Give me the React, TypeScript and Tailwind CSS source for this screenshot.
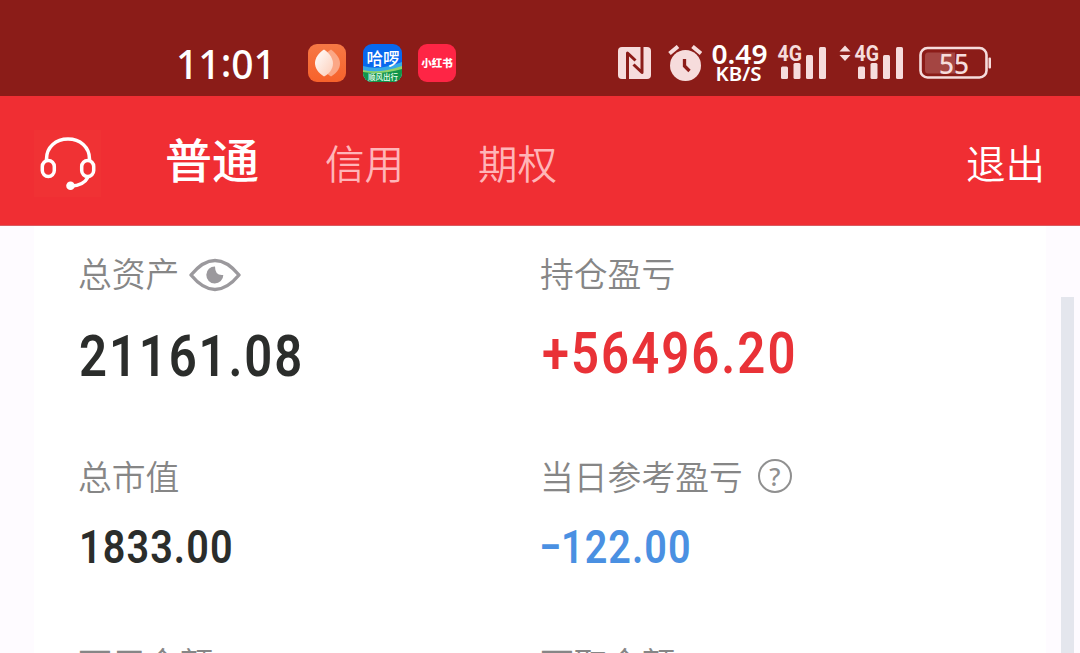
import type { ReactNode } from 'react';

const cjk = "font-['Noto_Sans_CJK_SC',sans-serif]";

function SignalBars() {
  return (
    <svg width="50" height="40" viewBox="0 0 50 40" className="block shrink-0 overflow-visible">
      <g fill="#f6dcdc">
        <rect x="5" y="22.500" width="7" height="12.500" rx="1.500" />
        <rect x="17.500" y="19" width="7" height="16" rx="1.500" />
        <rect x="30" y="11" width="7" height="24" rx="1.500" />
        <rect x="43" y="3" width="7" height="32" rx="1.500" />
      </g>
      <text x="1.500" y="17" fontSize="22.500" fontWeight="700" fill="#f6dcdc" fontFamily="Roboto" textLength="24.500" lengthAdjust="spacingAndGlyphs">4G</text>
    </svg>
  );
}

function StatusBar() {
  return (
    <header className="flex h-24 shrink-0 items-start bg-[#8b1c18] text-white">
      <div className="mt-[44px] ml-[176px] w-[132px] font-['Noto_Sans',sans-serif] text-[39px] leading-[40px] font-medium whitespace-nowrap">
        11<span className="relative -top-[2px]">:</span>01
      </div>
      <svg width="38" height="38" viewBox="0 0 38 38" className="mt-[44px] shrink-0">
        <defs>
          <linearGradient id="orange" x1="0" y1="0" x2="0" y2="1">
            <stop offset="0" stopColor="#f67845" />
            <stop offset="1" stopColor="#f7622b" />
          </linearGradient>
          <linearGradient id="petal" x1="0" y1="0" x2="1" y2="1">
            <stop offset="0" stopColor="#fff" />
            <stop offset="1" stopColor="#fccdb8" />
          </linearGradient>
        </defs>
        <rect width="38" height="38" rx="9" fill="url(#orange)" />
        <path d="M23 5.500 C29 10 32 15 32 19.500 C32 25 28 29.500 23 32.500 L18 29 L18 9 Z" fill="#fba786" />
        <path d="M16 5.500 C22 9.500 25 15 25 19.500 C25 25 21 30 16 32.500 C10 29 7 24 7 19 C7 14 11 8.500 16 5.500 Z" fill="url(#petal)" />
      </svg>
      <svg width="39" height="38" viewBox="0 0 39 38" className="mt-[44px] ml-[17px] shrink-0 overflow-visible">
        <defs>
          <clipPath id="tile"><rect width="39" height="38" rx="9" /></clipPath>
        </defs>
        <g clipPath="url(#tile)">
          <rect width="39" height="38" fill="#0868ee" />
          <path d="M0 22 Q16 27 39 18 V38 H0 Z" fill="#35a9e7" />
          <path d="M0 26 Q16 30 39 22 V38 H0 Z" fill="#8ed36b" />
          <path d="M0 28 Q18 31 39 25 V38 H0 Z" fill="#12954a" />
        </g>
        <text x="3.500" y="21" fontSize="17" fontWeight="500" fill="#fff" fontFamily="Noto Sans CJK SC" textLength="33" lengthAdjust="spacingAndGlyphs">哈啰</text>
        <text x="5" y="35.500" fontSize="7.500" fontWeight="500" fill="#e8fff0" fontFamily="Noto Sans CJK SC" textLength="30" lengthAdjust="spacingAndGlyphs">顺风出行</text>
      </svg>
      <div className={`${cjk} mt-[44px] ml-[16px] flex h-[38px] w-[38px] shrink-0 items-center justify-center rounded-[9px] bg-[#fe2545] text-[10.500px] leading-none font-black whitespace-nowrap`}>小红书</div>
      <svg width="33" height="33" viewBox="0 0 33 33" className="mt-[46px] ml-[162px] shrink-0">
        <rect width="33" height="32" rx="4" y="1" fill="#f6dcdc" />
        <path d="M9.500 33 V7 L17.500 14.500 M24 0 V26.500 L15.500 18.500" fill="none" stroke="#8b1c18" strokeWidth="3" strokeLinejoin="round" />
      </svg>
      <svg width="34" height="37" viewBox="0 0 34 37" className="mt-[45px] ml-[17px] shrink-0">
        <circle cx="17.500" cy="20.500" r="15.500" fill="#f6dcdc" />
        <path d="M1.500 8.500 L10 1.500 M24.500 1.500 L33 8.500" stroke="#f6dcdc" strokeWidth="4" />
        <path d="M16.500 14 V21 L21.500 26" fill="none" stroke="#8b1c18" strokeWidth="3.300" />
      </svg>
      <svg width="58" height="44" viewBox="0 0 58 44" className="mt-[42px] ml-[9px] shrink-0 overflow-visible">
        <text x="0.500" y="21.500" fontSize="27.500" fontWeight="600" fill="#fff" fontFamily="Noto Sans" textLength="56" lengthAdjust="spacingAndGlyphs">0.49</text>
        <text x="4.500" y="39" fontSize="19.500" fontWeight="600" fill="#fff" fontFamily="Noto Sans" textLength="46" lengthAdjust="spacingAndGlyphs">KB/S</text>
      </svg>
      <div className="mt-[44px] ml-[7px]"><SignalBars /></div>
      <svg width="12" height="17" viewBox="0 0 12 17" className="mt-[45px] ml-[13px] shrink-0">
        <path d="M6 0.500 L11.500 6.500 H0.500 Z M0.500 10 H11.500 L6 16 Z" fill="#f6dcdc" />
      </svg>
      <div className="mt-[44px] ml-[2px]"><SignalBars /></div>
      <svg width="73" height="34" viewBox="0 0 73 34" className="mt-[46px] ml-[16px] shrink-0 overflow-visible">
        <rect x="1.500" y="2" width="66" height="29.500" rx="7" fill="none" stroke="#f6dcdc" strokeWidth="2.600" />
        <path d="M9 6.500 H36 V27.500 H9 Q6 27.500 6 24 V10 Q6 6.500 9 6.500 Z" fill="#a44542" />
        <rect x="69.500" y="11.500" width="2.500" height="11" rx="1" fill="#f6dcdc" />
        <text x="20" y="27.500" fontSize="27" fontWeight="500" fill="#f6dcdc" fontFamily="Noto Sans" textLength="30" lengthAdjust="spacingAndGlyphs">55</text>
      </svg>
    </header>
  );
}

function NavBar() {
  return (
    <nav className={`${cjk} flex h-[130px] shrink-0 items-start border-b border-[#d95b60] bg-[#f02e33] whitespace-nowrap text-white`}>
      <div className="mt-[34px] ml-[34px] h-[67px] w-[67px] bg-[#f03234]">
        <svg width="67" height="67" viewBox="0 0 67 67" fill="none" stroke="#fff" strokeWidth="3.500">
          <path d="M12.500 31 V29 C12.500 17 22 9 34 9 C46 9 55.500 17 55.500 29 V31" />
          <rect x="8.300" y="30.500" width="12" height="16" rx="6" />
          <rect x="47.700" y="30.500" width="12" height="16" rx="6" />
          <path d="M54.500 46.500 C51 53 45 56 37 56" />
          <circle cx="36.500" cy="55.800" r="4.300" fill="#fff" stroke="none" />
        </svg>
      </div>
      <span className="mt-[38px] ml-[64px] w-[160px] text-[47px] leading-none font-medium">普通</span>
      <span className="mt-[46px] w-[153px] text-[39.500px] leading-none font-[350] text-[#ffb5b8]">信用</span>
      <span className="mt-[46px] text-[39.500px] leading-none font-[350] text-[#ffb5b8]">期权</span>
      <span className="mt-[46px] mr-[35px] ml-auto text-[39.500px] leading-none font-[350]">退出</span>
    </nav>
  );
}

function Label({ children }: { children: ReactNode }) {
  return <div className={`${cjk} flex h-[34px] items-start text-[33.800px] leading-[34px] font-[350] whitespace-nowrap text-[#868686]`}>{children}</div>;
}

export default function App() {
  return (
    <div className="flex h-[653px] w-[1080px] flex-col overflow-hidden bg-white">
      <StatusBar />
      <NavBar />
      <main className="flex min-h-0 flex-1 bg-[#fefbff]">
        <div className="ml-[34px] flex w-[1012px] bg-white pl-[44px] font-['Roboto',sans-serif] font-semibold whitespace-nowrap">
          <section className="w-[462px] pt-[30px]">
            <Label>
              总资产
              <svg width="52" height="34" viewBox="0 0 52 34" className="mt-[2px] ml-[10px]">
                <path d="M2 17 Q14 2.500 26 2.500 Q38 2.500 50 17 Q38 31.500 26 31.500 Q14 31.500 2 17 Z" fill="none" stroke="#9b999d" strokeWidth="3.400" strokeLinejoin="round" />
                <path d="M26 8.500 A8.500 8.500 0 1 0 34.300 17 Q26 18 26 8.500 Z" fill="#9b999d" />
              </svg>
            </Label>
            <div className="mt-[38px] ml-[1px] h-[57px] origin-left scale-x-[0.86] text-[57px] leading-none tracking-[2.200px] text-[#2b2d2b]">21161.08</div>
            <div className="mt-[74px]"><Label>总市值</Label></div>
            <div className="mt-[31px] ml-[1px] h-[46px] origin-left scale-x-[0.86] text-[46px] leading-none tracking-[1.300px] text-[#2b2d2b]">1833.00</div>
            <div className="mt-[76px]"><Label>可用金额</Label></div>
          </section>
          <section className="pt-[30px]">
            <Label>持仓盈亏</Label>
            <div className="mt-[35px] ml-[1.500px] h-[57px] origin-left scale-x-[0.86] text-[57px] leading-none tracking-[2.400px] text-[#e93237]">+56496.20</div>
            <div className="mt-[77px]">
              <Label>
                当日参考盈亏
                <span className="ml-[15px] flex h-[34px] w-[34px] items-center justify-center rounded-full border-2 border-[#909090] font-['Noto_Sans',sans-serif] text-[25px] leading-none font-medium text-[#909090]">?</span>
              </Label>
            </div>
            <div className="mt-[31px] -ml-[1.500px] h-[46px] origin-left scale-x-[0.86] text-[46px] leading-none tracking-[1.200px] text-[#4a90e2]">
              <span className="tracking-[0px]">−</span>122.00
            </div>
            <div className="mt-[76px]"><Label>可取金额</Label></div>
          </section>
        </div>
        <div className="mt-[71px] ml-[15px] w-[13px] bg-[#e4e6ed]" />
      </main>
    </div>
  );
}
